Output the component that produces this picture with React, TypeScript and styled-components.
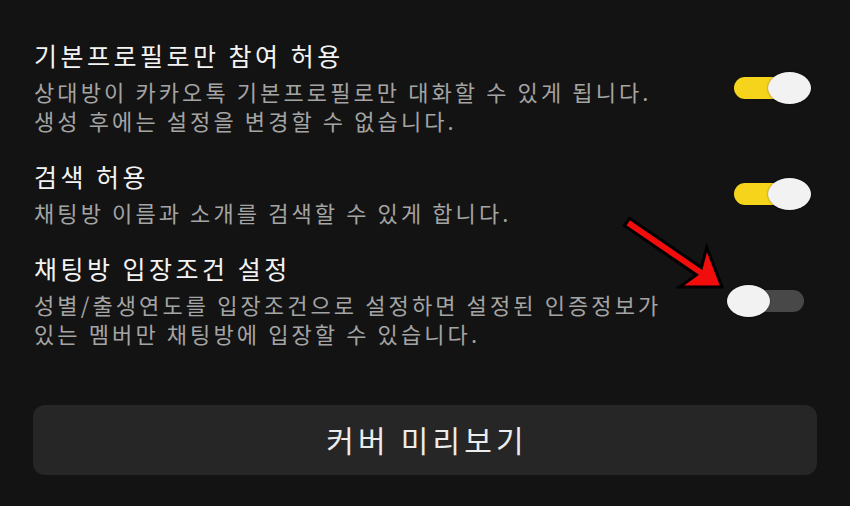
import React from "react";
import styled, {createGlobalStyle} from "styled-components";

const GlobalStyle = createGlobalStyle`
    html, body {
        margin : 0;
        padding : 0;
        background : #131313;
    }
    body {
        font-family : "Noto Sans CJK KR", "Noto Sans", sans-serif;
    }
`;

const Page = styled.div`
    position : relative;
    width : 850px;
    height : 506px;
    box-sizing : border-box;
    padding : 40px 33px 0 33px;
    background : #131313;
    display : flex;
    flex-direction : column;
    overflow : hidden;
`;

const List = styled.div`
    display : flex;
    flex-direction : column;
    gap : 26px;
`;

const Row = styled.div`
    display : flex;
    align-items : center;
    justify-content : space-between;
    padding : 0 6px 0 1px;
`;

const TextCol = styled.div`
    display : flex;
    flex-direction : column;
    gap : 7px;
`;

const Title = styled.div`
    color : #f3f3f3;
    font-size : 25px;
    line-height : 30px;
    letter-spacing : 3.5px;
    white-space : nowrap;
`;

const Desc = styled.div`
    color : #a4a4a4;
    font-size : 22px;
    line-height : 29px;
    letter-spacing : 3.1px;
    white-space : nowrap;
`;

const Switch = styled.div<{ $on: boolean }>`
    position : relative;
    width : 84px;
    height : 32px;
    flex-shrink : 0;
    display : flex;
    align-items : center;
    justify-content : ${p => (p.$on ? "flex-end" : "flex-start")};

    &::before {
        content : "";
        position : absolute;
        left : 7px;
        right : 7px;
        top : 5px;
        height : 22px;
        border-radius : 11px;
        background : ${p => (p.$on ? "#f6d41c" : "#484848")};
    }
`;

const Knob = styled.span`
    position : relative;
    width : 43px;
    height : 32px;
    border-radius : 50%;
    background : #f2f2f2;
    box-shadow : 0 0 2px rgba(0, 0, 0, 0.5);
`;

const PreviewButton = styled.button`
    margin-top : 57px;
    height : 70px;
    width : 100%;
    border : none;
    border-radius : 12px;
    background : #262626;
    color : #ececec;
    font-family : "Noto Sans CJK KR", "Noto Sans", sans-serif;
    font-size : 30px;
    letter-spacing : 4.2px;
    padding : 0 0 2px 4px;
`;

const Arrow = styled.svg`
    position : absolute;
    left : 610px;
    top : 205px;
    width : 125px;
    height : 95px;
    pointer-events : none;
`;

const settings = [
    {
        title: "기본프로필로만 참여 허용",
        desc: ["상대방이 카카오톡 기본프로필로만 대화할 수 있게 됩니다.", "생성 후에는 설정을 변경할 수 없습니다."],
        on: true,
    },
    {
        title: "검색 허용",
        desc: ["채팅방 이름과 소개를 검색할 수 있게 합니다."],
        on: true,
    },
    {
        title: "채팅방 입장조건 설정",
        desc: ["성별/출생연도를 입장조건으로 설정하면 설정된 인증정보가", "있는 멤버만 채팅방에 입장할 수 있습니다."],
        on: false,
    },
];

const App: React.FC = () => {
    return (
        <>
            <GlobalStyle/>
            <Page>
                <List>
                    {settings.map(item => (
                        <Row key={item.title}>
                            <TextCol>
                                <Title>{item.title}</Title>
                                <Desc>
                                    {item.desc.map(line => (
                                        <div key={line}>{line}</div>
                                    ))}
                                </Desc>
                            </TextCol>
                            <Switch $on={item.on}>
                                <Knob/>
                            </Switch>
                        </Row>
                    ))}
                </List>
                <PreviewButton>커버 미리보기</PreviewButton>
                <Arrow viewBox="0 0 125 95">
                    <polygon
                        points="19.5,13.3 91.4,62.5 96.7,42.4 112,82 69.5,82 86.4,69.9 14.5,20.7"
                        fill="#f20d0d"
                        stroke="#000"
                        strokeWidth="3"
                        strokeLinejoin="miter"
                    />
                </Arrow>
            </Page>
        </>
    );
};

export default App;
